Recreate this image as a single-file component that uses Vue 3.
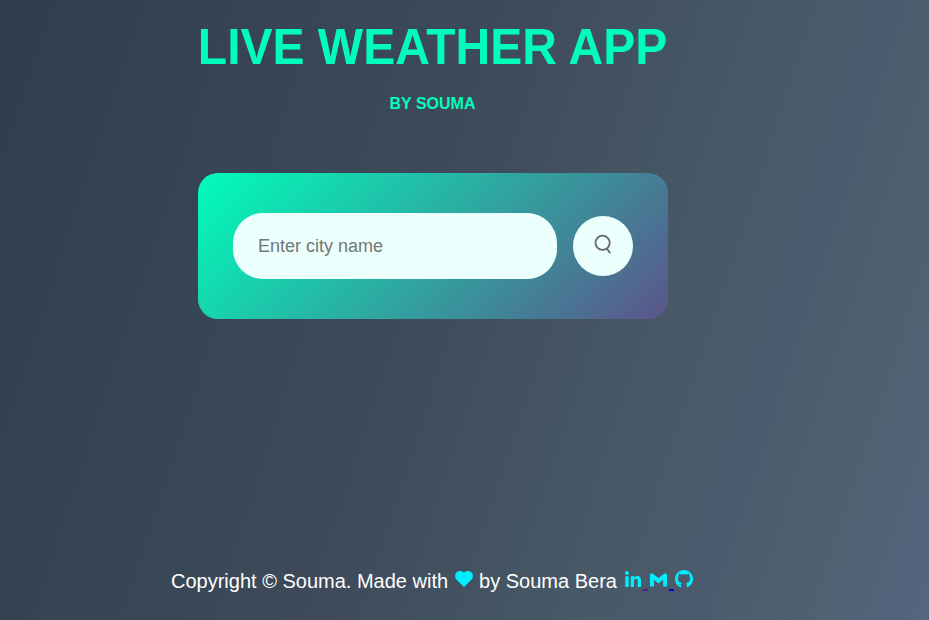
<script setup>
import { ref } from 'vue'

const city = ref('')
</script>

<template>
  <div class="page">
    <header class="heading">
      <h1>LIVE WEATHER APP</h1>
      <h4>BY SOUMA</h4>
    </header>

    <main class="card">
      <form class="search" @submit.prevent>
        <input v-model="city" type="text" placeholder="Enter city name" spellcheck="false" />
        <button type="submit" aria-label="Search">
          <svg class="search-icon" viewBox="0 0 20 22">
            <circle cx="9.6" cy="9.8" r="7.1" />
            <path d="M13.600 15.300L17.200 20.300" />
          </svg>
        </button>
      </form>
    </main>

    <footer class="footer">
      <span>Copyright © Souma. Made with</span>
      <svg class="heart" viewBox="0 0 18 16">
        <path d="M9 16L1.600 8.700C-.4 6.700-.4 3.400 1.500 1.500 3.500-.5 7-.5 9 1.600 11-.5 14.500-.5 16.500 1.500 18.400 3.400 18.400 6.700 16.400 8.700Z" />
      </svg>
      <span class="author">by Souma Bera</span>
      <a class="link linkedin" aria-label="LinkedIn">
        <svg viewBox="0 0 16 16">
          <circle cx="2" cy="2" r="2" />
          <path d="M.3 5.300H3.700V16H.3ZM5.700 5.300H8.900V6.800C9.500 5.700 10.700 5 12.200 5 15.300 5 16 7.100 16 9.900V16H12.700V10.500C12.700 9.100 12.600 7.800 11 7.800 9.300 7.800 9 9.100 9 10.500V16H5.700Z" />
        </svg>
      </a>
      <i class="gap visited"></i>
      <a class="link mail" aria-label="Email">
        <svg viewBox="0 0 18 14">
          <path d="M0 14V1.500Q0 0 1.500 0H2.800L9 5 15.200 0H16.500Q18 0 18 1.500V14H13.900V6.700L9 10.700 4.100 6.700V14Z" />
        </svg>
      </a>
      <i class="gap fresh"></i>
      <a class="link github" aria-label="GitHub">
        <svg viewBox="0 0 18 18">
          <path d="M6.200 17.500C2.500 16.400 0 13 0 9.100 0 4.100 4 .1 9 .1S18 4.100 18 9.100C18 13 15.500 16.400 11.800 17.500V14.700C11.800 13.900 11.600 13.300 11.200 12.900 13.400 12.600 15.100 11.700 15.100 8.500 15.100 7.500 14.800 6.700 14.200 6.100 14.300 5.800 14.600 4.900 14.100 3.700 14.100 3.700 13.300 3.400 11.600 4.600 10 4.200 8 4.200 6.400 4.600 4.700 3.400 3.900 3.700 3.900 3.700 3.400 4.900 3.700 5.800 3.800 6.100 3.200 6.700 2.900 7.500 2.900 8.500 2.900 11.700 4.600 12.600 6.800 12.900 6.500 13.200 6.300 13.600 6.200 14.200 5.600 14.500 4.300 14.700 3.500 13.300 4.100 15 5.200 15.300 6.200 15.200Z" />
        </svg>
      </a>
    </footer>
  </div>
</template>

<style>
body {
  margin: 0;
}
</style>

<style scoped>
.page {
  box-sizing: border-box;
  height: 620px;
  padding: 16px 63px 0 0;
  display: flex;
  flex-direction: column;
  align-items: center;
  overflow: hidden;
  font-family: "Liberation Sans", Arial, sans-serif;
  background: linear-gradient(108deg, #303d4d 0%, #384656 30%, #3f4b5b 47%, #435361 59%, #485967 70%, #4b5b6e 79%, #4f616f 88%, #52637a 95%, #546580 100%);
}

.heading {
  height: 157px;
  color: #00feba;
  text-align: center;
  white-space: nowrap;
}

h1 {
  margin: 3px 0 0;
  padding-right: 1px;
  font-size: 48px;
  line-height: 56px;
  transform: scaleY(1.05);
}

h4 {
  margin: 20px 1px 0 0;
  font-size: 16px;
  line-height: 18px;
}

.card {
  box-sizing: border-box;
  width: 470px;
  height: 146px;
  padding: 40px 35px;
  border-radius: 20px;
  background: linear-gradient(135deg, #00feba, #5b548a);
}

.search {
  display: flex;
  align-items: center;
  justify-content: space-between;
}

input {
  box-sizing: border-box;
  width: 324px;
  height: 66px;
  padding: 10px 25px;
  border: 0;
  outline: 0;
  border-radius: 30px;
  background: #ebfffc;
  color: #555;
  font: 18px "Liberation Sans", Arial, sans-serif;
}

input::placeholder {
  color: #757575;
}

button {
  width: 60px;
  height: 60px;
  padding: 0 0 4px;
  display: flex;
  align-items: center;
  justify-content: center;
  border: 0;
  border-radius: 50%;
  background: #ebfffc;
}

.search-icon {
  width: 20px;
  height: 22px;
  fill: none;
  stroke: #666;
  stroke-width: 1.8;
}

.footer {
  align-self: flex-start;
  height: 24px;
  margin: 250px 0 0 171px;
  display: flex;
  align-items: flex-start;
  color: #fff;
  font-size: 20px;
  line-height: 24px;
  white-space: nowrap;
}

.footer svg {
  display: block;
  fill: #00eeff;
}

.heart {
  width: 18px;
  height: 16px;
  margin: 2px 6px 0 7px;
}

.author {
  margin-right: 8px;
}

.linkedin svg {
  width: 16px;
  height: 16px;
  margin-top: 2px;
}

.mail svg {
  width: 17px;
  height: 14px;
  margin-top: 4px;
}

.github svg {
  width: 18px;
  height: 18px;
  margin-top: 1px;
}

.gap {
  width: 5px;
  height: 2px;
  margin: 20px 2px 0;
}

.visited {
  background: #551a8b;
}

.fresh {
  margin: 20px 1px 0 2px;
  background: #0000ee;
}
</style>
